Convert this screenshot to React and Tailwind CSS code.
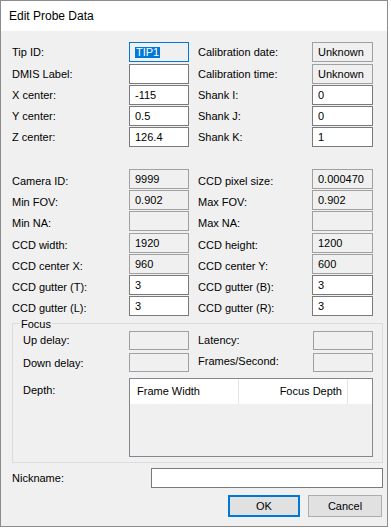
import React from "react";

const Box = ({ value = "", editable = false, focused = false, className = "" }) => {
  const look = focused
    ? "border-[#0078d7] bg-[#f0f0f0]"
    : editable
    ? "border-[#7a7a7a] bg-white"
    : "border-[#a0a0a0] bg-[#f0f0f0]";
  return (
    <div
      className={`h-[20px] border flex items-center pl-[5px] text-black whitespace-nowrap ${look} ${className}`}
    >
      {focused ? (
        <span className="bg-[#0078d7] text-white leading-[11px] h-[11px] px-px">{value}</span>
      ) : (
        value
      )}
    </div>
  );
};

const Row = ({ left, right, labelPad = "" }) => (
  <div className="flex items-center h-[20px]">
    <div className={`w-[117px] ${labelPad}`}>{left.label}</div>
    <Box {...left} className="w-[60px]" />
    <div className={`w-[9px]`} />
    <div className={`w-[114px] ${labelPad}`}>{right.label}</div>
    <Box {...right} className="w-[61px]" />
  </div>
);

const probeRows = [
  {
    left: { label: "Tip ID:", value: "TIP1", focused: true },
    right: { label: "Calibration date:", value: "Unknown" },
  },
  {
    left: { label: "DMIS Label:", value: "", editable: true },
    right: { label: "Calibration time:", value: "Unknown" },
    gap: "mt-[2px]",
  },
  {
    left: { label: "X center:", value: "-115", editable: true },
    right: { label: "Shank I:", value: "0", editable: true },
    gap: "mt-[1px]",
  },
  {
    left: { label: "Y center:", value: "0.5", editable: true },
    right: { label: "Shank J:", value: "0", editable: true },
    gap: "mt-[1px]",
  },
  {
    left: { label: "Z center:", value: "126.4", editable: true },
    right: { label: "Shank K:", value: "1", editable: true },
    gap: "mt-[1px]",
  },
];

const cameraRows = [
  {
    left: { label: "Camera ID:", value: "9999" },
    right: { label: "CCD pixel size:", value: "0.000470" },
  },
  {
    left: { label: "Min FOV:", value: "0.902" },
    right: { label: "Max FOV:", value: "0.902" },
    gap: "mt-[1px]",
  },
  {
    left: { label: "Min NA:", value: "" },
    right: { label: "Max NA:", value: "" },
    gap: "mt-[1px]",
  },
  {
    left: { label: "CCD width:", value: "1920" },
    right: { label: "CCD height:", value: "1200" },
    gap: "mt-[2px]",
  },
  {
    left: { label: "CCD center X:", value: "960" },
    right: { label: "CCD center Y:", value: "600" },
    gap: "mt-[1px]",
  },
  {
    left: { label: "CCD gutter (T):", value: "3", editable: true },
    right: { label: "CCD gutter (B):", value: "3", editable: true },
    gap: "mt-[1px]",
  },
  {
    left: { label: "CCD gutter (L):", value: "3", editable: true },
    right: { label: "CCD gutter (R):", value: "3", editable: true },
    gap: "mt-[1px]",
  },
];

export default function App() {
  return (
    <div className="w-[391px] h-[528px] bg-white font-['Liberation_Sans',Arial,sans-serif] text-[11px] text-black">
      <div className="w-[388px] h-[527px] border border-[#8c8c8c] bg-[#f0f0f0] flex flex-col">
        {/* title bar */}
        <div className="h-[30px] bg-white flex items-center pl-[8px] text-[12px]">
          Edit Probe Data
        </div>

        <div className="flex flex-col pl-[11px]">
          <div className="flex flex-col pt-[11px]">
            {probeRows.map((r, i) => (
              <div key={i} className={r.gap || ""}>
                <Row left={r.left} right={r.right} />
              </div>
            ))}
          </div>

          <div className="flex flex-col mt-[22px]">
            {cameraRows.map((r, i) => (
              <div key={i} className={r.gap || ""}>
                <Row left={r.left} right={r.right} labelPad="pt-[4px]" />
              </div>
            ))}
          </div>

          {/* Focus group */}
          <div className="relative mt-[7px] w-[371px] h-[140px] border border-[#dcdcdc] pl-[10px] pt-[7px]">
            <span className="absolute left-[7px] top-[-8px] bg-[#f0f0f0] px-px">Focus</span>
            <div className="flex items-center h-[19px]">
              <div className="w-[106px]">Up delay:</div>
              <Box className="w-[60px] !h-[19px]" />
              <div className="w-[9px]" />
              <div className="w-[115px]">Latency:</div>
              <Box className="w-[60px] !h-[19px]" />
            </div>
            <div className="flex items-center h-[19px] mt-[3px]">
              <div className="w-[106px] pt-[1px]">Down delay:</div>
              <Box className="w-[60px] !h-[19px]" />
              <div className="w-[9px]" />
              <div className="w-[115px] pb-[2px]">Frames/Second:</div>
              <Box className="w-[60px] !h-[19px]" />
            </div>
            <div className="flex mt-[6px]">
              <div className="w-[106px] pt-[4px]">Depth:</div>
              <div className="w-[244px] h-[79px] border border-[#828790] bg-[#f0f0f0] flex flex-col">
                <div className="h-[25px] bg-white flex items-center">
                  <div className="w-[109px] h-full border-r border-[#e5e5e5] flex items-center pl-[7px]">
                    Frame Width
                  </div>
                  <div className="w-[109px] h-full border-r border-[#e5e5e5] flex items-center justify-end pr-[5px]">
                    Focus Depth
                  </div>
                  <div className="flex-1" />
                </div>
              </div>
            </div>
          </div>

          {/* Nickname */}
          <div className="flex items-center mt-[5px] h-[20px]">
            <div className="w-[139px]">Nickname:</div>
            <div className="w-[232px] h-[20px] border border-[#7a7a7a] bg-white" />
          </div>

          {/* buttons */}
          <div className="flex mt-[7px] pl-[216px] gap-[8px]">
            <button className="w-[72px] h-[22px] border-2 border-[#0078d7] bg-[#e1e1e1] text-[11px]">
              OK
            </button>
            <button className="w-[74px] h-[22px] border border-[#adadad] bg-[#e1e1e1] text-[11px]">
              Cancel
            </button>
          </div>
        </div>
      </div>
    </div>
  );
}
